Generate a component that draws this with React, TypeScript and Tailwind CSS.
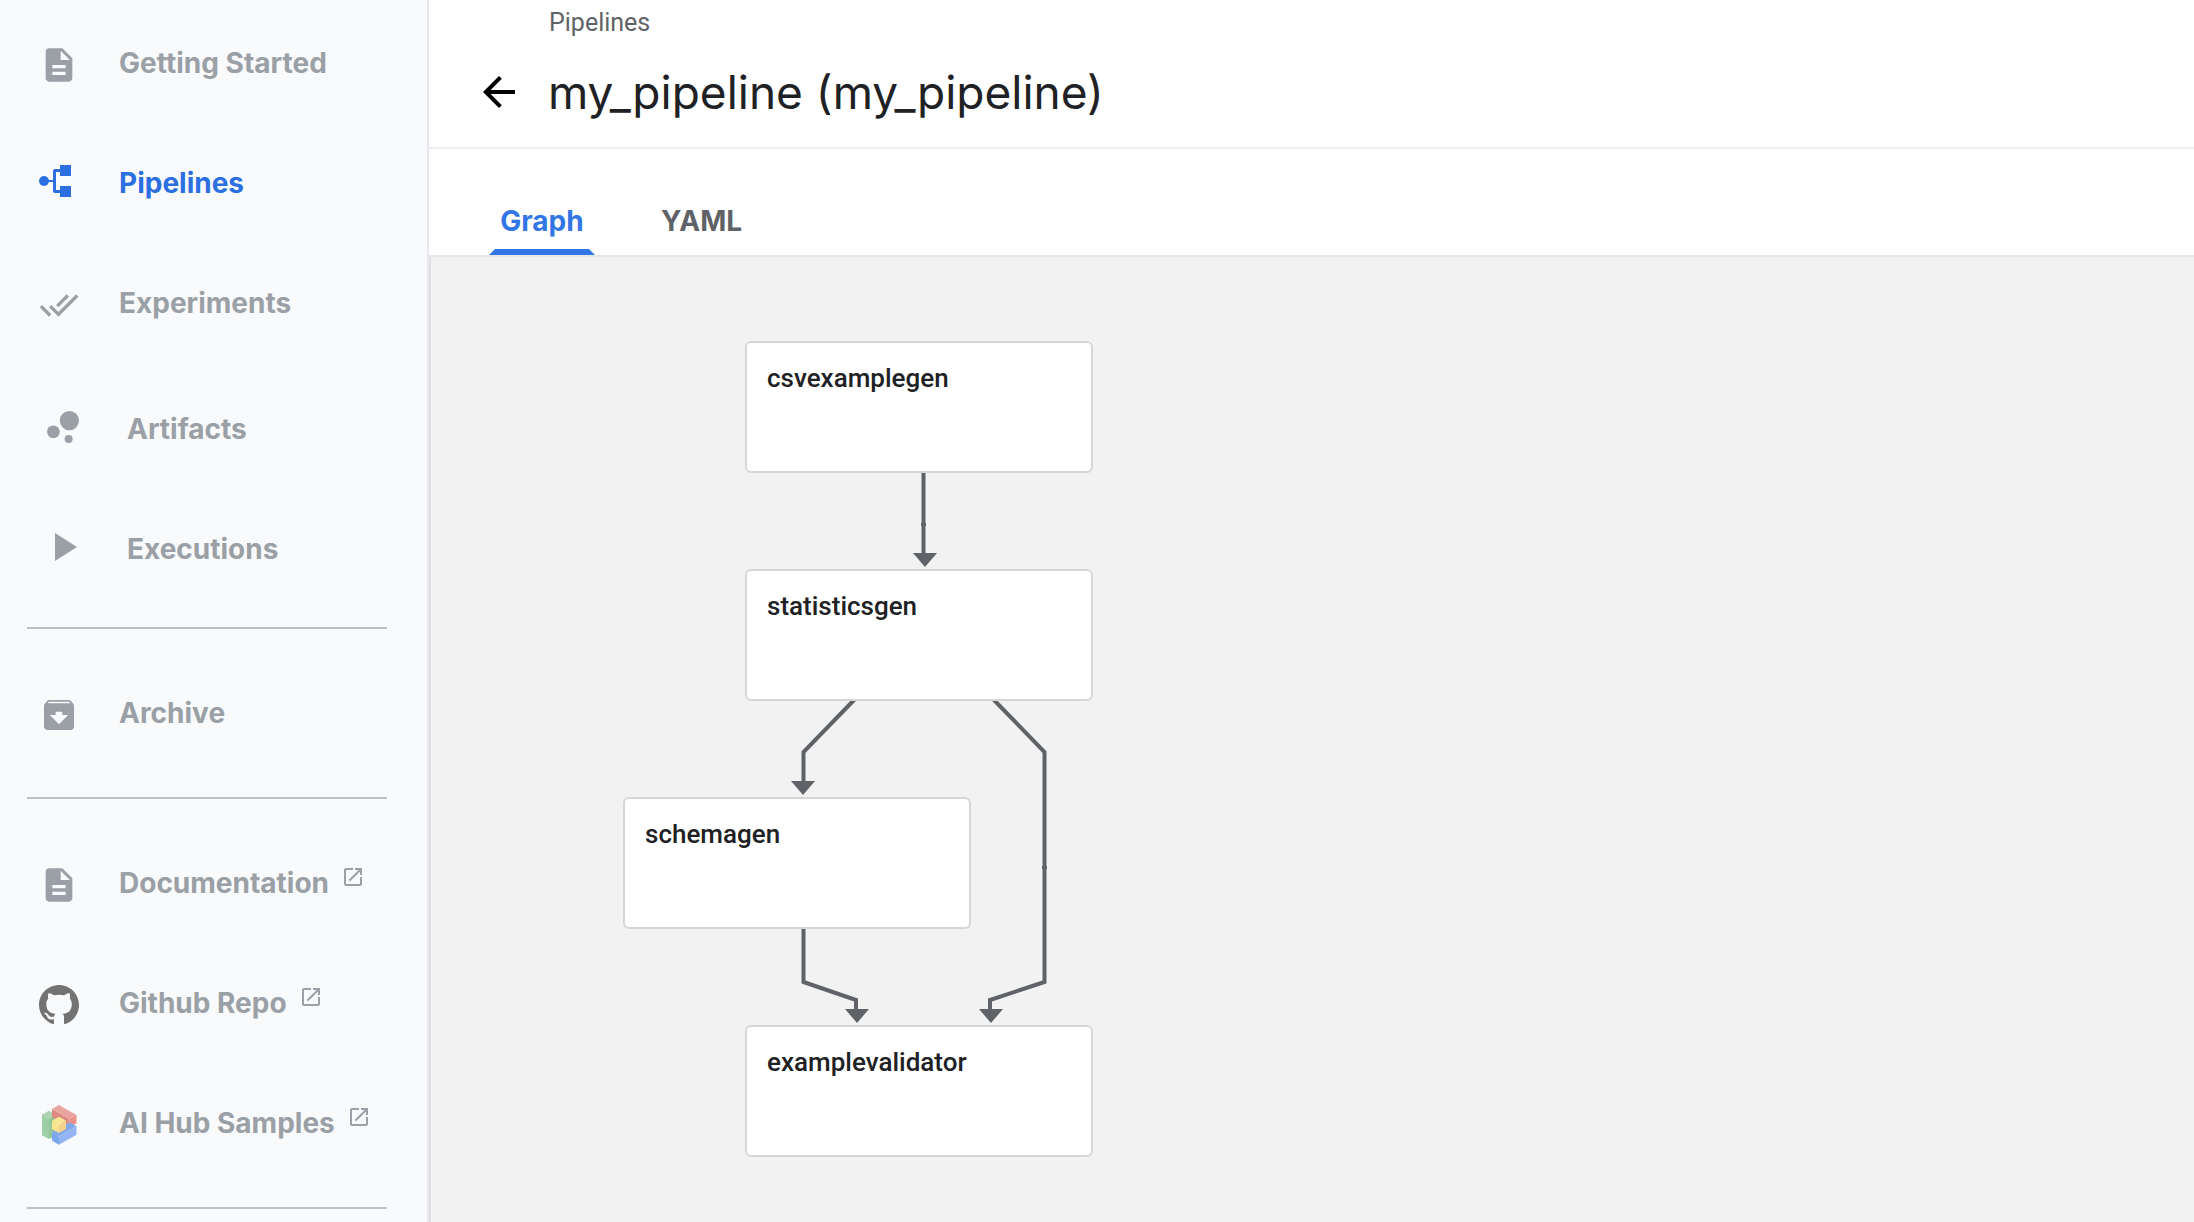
import type { ReactNode } from "react";
import {
  MdArchive,
  MdArrowBack,
  MdBubbleChart,
  MdDescription,
  MdDoneAll,
  MdOpenInNew,
  MdPlayArrow,
} from "react-icons/md";

function PipelinesIcon() {
  return (
    <svg viewBox="0 0 40 40" className="size-10" fill="currentColor" aria-hidden="true">
      <circle cx="5" cy="16" r="5" />
      <path d="M9 15h5V6a2 2 0 0 1 2-2h5V0h11v11H21V7h-4v18h4v-4h11v11H21v-4h-5a2 2 0 0 1-2-2v-9H9z" />
    </svg>
  );
}

function GithubIcon() {
  return (
    <svg viewBox="0 0 16 16" className="size-10" fill="#737373" aria-hidden="true">
      <path
        fillRule="evenodd"
        d="M8 0C3.58 0 0 3.58 0 8c0 3.54 2.29 6.53 5.47 7.59.4.07.55-.17.55-.38 0-.19-.01-.82-.01-1.49-2.01.37-2.53-.49-2.69-.94-.09-.23-.48-.94-.82-1.13-.28-.15-.68-.52-.01-.53.63-.01 1.08.58 1.23.82.72 1.21 1.87.87 2.33.66.07-.52.28-.87.51-1.07-1.78-.2-3.64-.89-3.64-3.95 0-.87.31-1.59.82-2.15-.08-.2-.36-1.02.08-2.12 0 0 .67-.21 2.2.82.64-.18 1.32-.27 2-.27s1.36.09 2 .27c1.53-1.04 2.2-.82 2.2-.82.44 1.1.16 1.92.08 2.12.51.56.82 1.27.82 2.15 0 3.07-1.87 3.75-3.65 3.95.29.25.54.73.54 1.48 0 1.07-.01 1.93-.01 2.2 0 .21.15.46.55.38A8.01 8.01 0 0 0 16 8c0-4.42-3.58-8-8-8z"
      />
    </svg>
  );
}

function AiHubIcon() {
  return (
    <svg viewBox="0 0 40 40" className="size-10" aria-hidden="true">
      <path fill="#afd4b3" d="M3 9.5 10 5.7l7 3.8-7 4z" />
      <path fill="#a0cea6" d="M3 9.5l7 4V34l-7-3.8z" />
      <path fill="#93c79a" d="M10 13.5l7-4v21L10 34z" />
      <path fill="#eaa49f" d="M20 0l17.5 10-7 4L13 4z" />
      <path fill="#df8a83" d="M13 4l17.5 10v8.3L13 12z" />
      <path fill="#e79189" d="M30.5 14l7-4v8.3l-7 4z" />
      <path fill="#84a9ea" d="M13 27.5l17.5-10.2 7 4L20 31.5z" />
      <path fill="#7ba5ec" d="M13 27.5l7 4v8.3l-7-4z" />
      <path fill="#94b5f4" d="M20 31.5l17.5-10.2v8.5L20 39.8z" />
      <path fill="#f9e893" d="M13 15.7l7-4 7 4-7 4z" />
      <path fill="#f8e38f" d="M13 15.7l7 4V28l-7-4z" />
      <path fill="#f5d28b" d="M20 19.7l7-4V24l-7 4z" />
    </svg>
  );
}

type NavItemProps = {
  label: string;
  icon: ReactNode;
  active?: boolean;
  large?: boolean;
  external?: boolean;
};

function NavItem({ label, icon, active, large, external }: NavItemProps) {
  return (
    <a
      href="#"
      aria-current={active ? "page" : undefined}
      className={`flex h-[120px] items-center pl-[39px] text-[28px] leading-8 font-bold ${
        active ? "text-[#2b6fe1]" : "text-[#9aa0a6]"
      } ${large ? "pt-2" : ""}`}
    >
      <span className={`shrink-0 ${large ? "" : "mt-1"}`}>{icon}</span>
      <span className={`ml-10 whitespace-nowrap ${large ? "mt-1" : ""}`}>{label}</span>
      {external && <MdOpenInNew className="mb-3 ml-3 size-6 shrink-0" />}
    </a>
  );
}

function Divider() {
  return <hr className="mx-[27px] my-6 border-t-2 border-[#bdc1c6] w-[360px]" />;
}

function Sidebar() {
  return (
    <nav className="w-[429px] shrink-0 overflow-hidden border-r-2 border-[#e8e8ec] bg-[#f8fafc] pt-[3px]">
      <NavItem label="Getting Started" icon={<MdDescription className="size-10" />} />
      <NavItem label="Pipelines" icon={<PipelinesIcon />} active />
      <NavItem label="Experiments" icon={<MdDoneAll className="size-10" />} />
      <NavItem label="Artifacts" icon={<MdBubbleChart className="size-12" />} large />
      <NavItem label="Executions" icon={<MdPlayArrow className="size-12" />} large />
      <Divider />
      <NavItem label="Archive" icon={<MdArchive className="size-10" />} />
      <Divider />
      <NavItem label="Documentation" icon={<MdDescription className="size-10" />} external />
      <NavItem label="Github Repo" icon={<GithubIcon />} external />
      <NavItem label="AI Hub Samples" icon={<AiHubIcon />} external />
      <Divider />
    </nav>
  );
}

function Header() {
  return (
    <header className="flex h-[149px] flex-col border-b-2 border-[#eeeeee] pl-[46px]">
      <a href="#" className="mt-[7px] ml-[74px] self-start font-[Roboto,sans-serif] text-[25px] leading-8 text-[#5f6368]">
        Pipelines
      </a>
      <div className="mt-[22px] flex items-center">
        <button type="button" aria-label="Back" className="text-black">
          <MdArrowBack className="size-12" />
        </button>
        <h1 className="ml-[25px] text-[46px] leading-[62px] whitespace-nowrap text-[#202124]">
          my_pipeline (my_pipeline)
        </h1>
      </div>
    </header>
  );
}

function Tabs() {
  return (
    <div role="tablist" className="flex h-[108px] items-end border-b-2 border-[#e6e6e6] pl-[60px] text-[28px] leading-8 font-bold">
      <button type="button" role="tab" aria-selected="true" className="flex w-[106px] flex-col items-center text-[#3275e4]">
        Graph
        <span className="mt-3 h-[6px] w-full bg-[#3275e4] [clip-path:polygon(6px_0,calc(100%-6px)_0,100%_100%,0_100%)]" />
      </button>
      <button type="button" role="tab" aria-selected="false" className="ml-[66px] pb-[18px] text-[#5f6368]">
        YAML
      </button>
    </div>
  );
}

const nodes = [
  { label: "csvexamplegen", x: 314, y: 84 },
  { label: "statisticsgen", x: 314, y: 312 },
  { label: "schemagen", x: 192, y: 540 },
  { label: "examplevalidator", x: 314, y: 768 },
];

const edges = [
  "M492.5 210V298",
  "M424 442L372.5 495V526",
  "M562 442L613.5 495V725L559 743V754",
  "M372.5 660V725L425 743V754",
];

const arrows = [
  [494, 296],
  [372, 524],
  [560, 752],
  [426, 752],
];

function Graph() {
  return (
    <main className="relative flex-1 overflow-hidden border-l-2 border-[#dedfe1] bg-[#f2f2f2]">
      <svg width="800" height="960" className="absolute top-0 left-0" aria-hidden="true">
        <g fill="none" stroke="#5f6368" strokeWidth="4">
          {edges.map((d) => (
            <path key={d} d={d} />
          ))}
        </g>
        <g fill="#5f6368">
          {arrows.map(([x, y]) => (
            <path key={x} d={`M${x - 12} ${y}h24l-12 14z`} />
          ))}
          <rect x="490" y="266" width="5" height="3" />
          <rect x="611" y="609" width="5" height="3" />
        </g>
      </svg>
      {nodes.map((n) => (
        <button
          key={n.label}
          type="button"
          style={{ left: n.x, top: n.y }}
          className="absolute flex h-[132px] w-[348px] items-start rounded-md border-2 border-[#d6d6d6] bg-white px-5 pt-[19px] font-[Roboto,sans-serif] text-[26px] leading-8 font-medium text-[#202124]"
        >
          {n.label}
        </button>
      ))}
    </main>
  );
}

export default function App() {
  return (
    <div className="flex h-screen overflow-hidden bg-white font-[Inter,sans-serif]">
      <Sidebar />
      <div className="flex min-w-0 flex-1 flex-col">
        <Header />
        <Tabs />
        <Graph />
      </div>
    </div>
  );
}
